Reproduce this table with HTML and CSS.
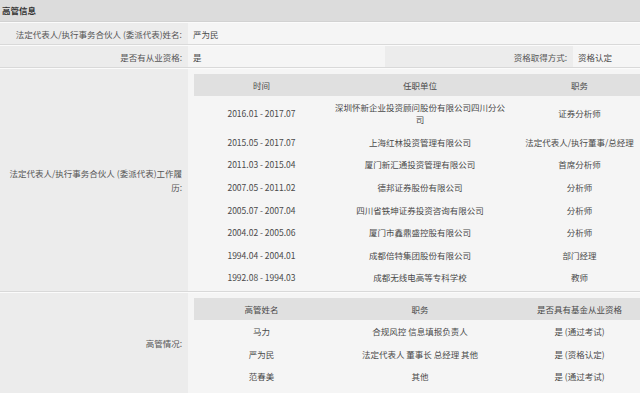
FILE: index.html
```html
<!DOCTYPE html>
<html lang="zh-CN">
<head>
<meta charset="utf-8">
<title>高管信息</title>
<link rel="stylesheet" href="styles.css">
</head>
<body>
<div class="page">
  <div class="title">高管信息</div>
  <table class="info">
    <colgroup>
      <col class="c-label">
      <col class="c-val">
      <col class="c-label2">
      <col class="c-val2">
    </colgroup>
    <tbody>
      <tr>
        <th class="label">法定代表人/执行事务合伙人 (委派代表)姓名:</th>
        <td class="val" colspan="3">严为民</td>
      </tr>
      <tr>
        <th class="label">是否有从业资格:</th>
        <td class="val">是</td>
        <th class="label label2">资格取得方式:</th>
        <td class="val">资格认定</td>
      </tr>
      <tr>
        <th class="label">法定代表人/执行事务合伙人 (委派代表)工作履历:</th>
        <td class="val nest" colspan="3">
          <table class="sub">
            <colgroup>
              <col class="s1"><col class="s2"><col class="s3">
            </colgroup>
            <thead>
              <tr><th>时间</th><th>任职单位</th><th>职务</th></tr>
            </thead>
            <tbody>
              <tr><td>2016.01 - 2017.07</td><td>深圳怀新企业投资顾问股份有限公司四川分公司</td><td>证券分析师</td></tr>
              <tr><td>2015.05 - 2017.07</td><td>上海红林投资管理有限公司</td><td>法定代表人/执行董事/总经理</td></tr>
              <tr><td>2011.03 - 2015.04</td><td>厦门新汇通投资管理有限公司</td><td>首席分析师</td></tr>
              <tr><td>2007.05 - 2011.02</td><td>德邦证券股份有限公司</td><td>分析师</td></tr>
              <tr><td>2005.07 - 2007.04</td><td>四川省铁坤证券投资咨询有限公司</td><td>分析师</td></tr>
              <tr><td>2004.02 - 2005.06</td><td>厦门市鑫鼎盛控股有限公司</td><td>分析师</td></tr>
              <tr><td>1994.04 - 2004.01</td><td>成都倍特集团股份有限公司</td><td>部门经理</td></tr>
              <tr><td>1992.08 - 1994.03</td><td>成都无线电高等专科学校</td><td>教师</td></tr>
            </tbody>
          </table>
        </td>
      </tr>
      <tr>
        <th class="label">高管情况:</th>
        <td class="val nest nest-last" colspan="3">
          <table class="sub">
            <colgroup>
              <col class="s1"><col class="s2"><col class="s3">
            </colgroup>
            <thead>
              <tr><th>高管姓名</th><th>职务</th><th>是否具有基金从业资格</th></tr>
            </thead>
            <tbody>
              <tr><td>马力</td><td>合规风控 信息填报负责人</td><td>是 (通过考试)</td></tr>
              <tr><td>严为民</td><td>法定代表人 董事长 总经理 其他</td><td>是 (资格认定)</td></tr>
              <tr><td>范春美</td><td>其他</td><td>是 (通过考试)</td></tr>
            </tbody>
          </table>
        </td>
      </tr>
    </tbody>
  </table>
</div>
</body>
</html>
```

FILE: styles.css
```css
html, body {
  margin: 0;
  padding: 0;
  background: #f4f4f4;
  overflow: hidden;
}
body {
  font-family: "Noto Sans CJK SC", "Noto Sans", sans-serif;
  font-size: 8.5px;
  color: #4a4a4a;
}
.page {
  width: 648px;
}
.title {
  height: 21px;
  line-height: 21px;
  background: #dcdcdc;
  font-weight: bold;
  color: #333;
  padding-left: 2px;
  border-bottom: 1px solid #d2d2d2;
}
.info {
  width: 648px;
  table-layout: fixed;
  border-collapse: separate;
  border-spacing: 0;
}
.c-label { width: 188px; }
.c-val { width: 197px; }
.c-label2 { width: 188px; }
.c-val2 { width: 75px; }

.info > tbody > tr > th,
.info > tbody > tr > td {
  border-top: 1px solid #fbfbfb;
  border-bottom: 1px solid #d9d9d9;
  height: 21px;
  vertical-align: middle;
}
.label {
  background: #ececec;
  font-weight: normal;
  text-align: right;
  padding: 0 6px 0 4px;
  color: #555;
  line-height: 14px;
}
.label2 {
  padding-right: 6px;
}
.val {
  background: #f5f5f5;
  text-align: left;
  padding: 0 0 0 5px;
}
.val.nest {
  padding: 5px 0 2px 6px;
}
.val.nest-last {
  padding-bottom: 5px;
}

.sub {
  width: 454px;
  table-layout: fixed;
  border-collapse: collapse;
}
.s1 { width: 135px; }
.s2 { width: 182px; }
.s3 { width: 137px; }
.sub th {
  background: #e0e0e0;
  font-weight: normal;
  height: 22px;
  padding: 0;
  line-height: 22px;
  text-align: center;
  color: #4a4a4a;
}
.sub td {
  padding: 5.3px 5px;
  line-height: 12px;
  text-align: center;
  vertical-align: middle;
}
```
